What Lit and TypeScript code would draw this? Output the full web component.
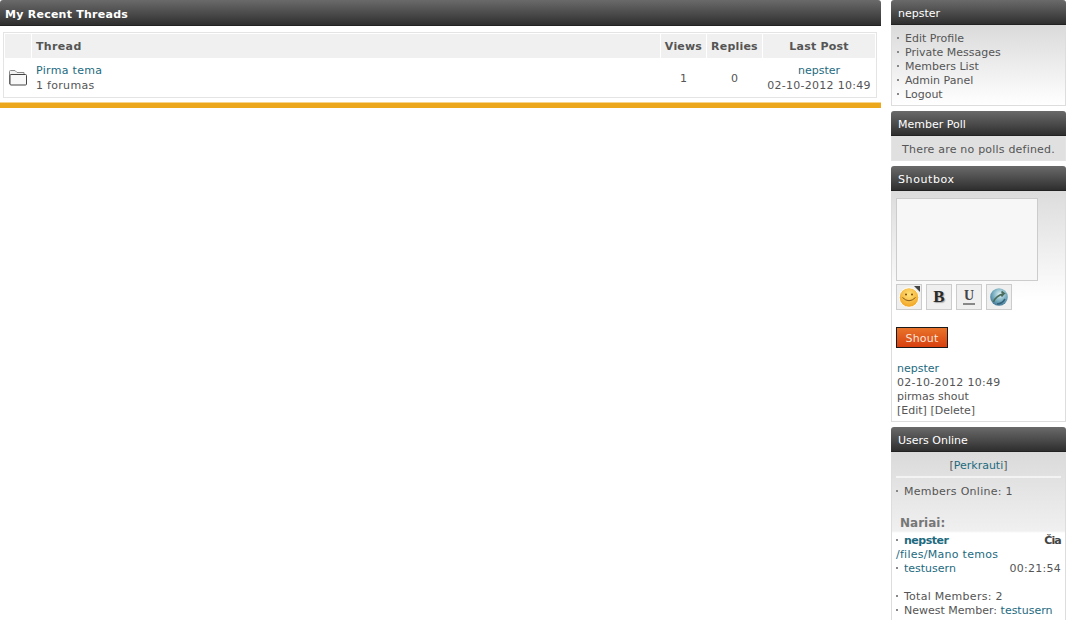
import { LitElement, html, css, svg } from "lit";
import { customElement } from "lit/decorators.js";

@customElement("app-root")
export class AppRoot extends LitElement {
  static styles = css`
    :host { display: block; width: 1066px; height: 620px; overflow: hidden; background: #fff;
      font-family: "DejaVu Sans", Verdana, sans-serif; font-size: 11px; line-height: 14px; color: #555; }
    a { color: #1d6a80; text-decoration: none; }
    .page { display: flex; gap: 10px; align-items: flex-start; }
    .main { width: 881px; flex: none; }
    .side { width: 175px; flex: none; display: flex; flex-direction: column; gap: 5px; }
    .cap { height: 25px; box-sizing: border-box; padding: 7px 7px 0; color: #fff; border-radius: 3px 3px 0 0;
      background: linear-gradient(#6a6a6a, #474747 60%, #2e2e2e); border-bottom: 1px solid #222; white-space: nowrap; }
    .main .cap { padding: 8px 5px 0; font-weight: bold; height: 26px; letter-spacing: .25px; }
    .wide { letter-spacing: .6px; }
    .tablewrap { margin: 6px 4px 0 3px; border: 1px solid #e4e4e4; padding: 1px 1px 0; height: 66px; box-sizing: border-box; }
    .grid { display: grid; grid-template-columns: 26px 628px 45px 55px 112px; column-gap: 1px; }
    .th { background: #f0f0f0; height: 24px; line-height: 25px; font-weight: bold; color: #555; text-align: center; letter-spacing: .2px; }
    .th.l { text-align: left; padding-left: 4px; letter-spacing: .35px; }
    .td { height: 40px; line-height: 15px; display: flex; flex-direction: column; justify-content: center; align-items: center; }
    .td.l { align-items: flex-start; padding-left: 4px; letter-spacing: .3px; }
    .td.i { align-items: flex-start; padding-left: 4px; }
    .num { letter-spacing: .27px; }
    .orange { height: 6px; margin-top: 4px; background: #eda71a; border-top: 1px solid #f6d48c; box-sizing: border-box; }
    .body { border: 1px solid #ddd; border-top: 0; box-sizing: border-box; background: linear-gradient(#dadada, #fff 100%); }
    .menu { padding: 7px 5px 0; height: 81px; }
    .row { white-space: nowrap; }
    .dot { display: inline-block; width: 8px; }
    .dot::before { content: ""; display: inline-block; width: 2px; height: 2px; background: #888; vertical-align: 3px; margin-right: 6px; }
    .poll { height: 25px; box-sizing: border-box; padding-top: 7px; text-align: center; background: #e0e0e0; border: 1px solid #e4e4e4; border-top: 0; letter-spacing: .2px; white-space: nowrap; }
    .shout { height: 231px; padding: 7px 4px 0; background: linear-gradient(#dcdcdc, #fff 110px, #fff); }
    .ta { width: 142px; height: 83px; box-sizing: border-box; background: #f7f7f7; border: 1px solid #ccc; }
    .tools { display: flex; gap: 4px; margin-top: 3px; }
    .tool { width: 26px; height: 26px; box-sizing: border-box; border: 1px solid #ccc; background: #efefef; display: flex; align-items: center; justify-content: center; position: relative; }
    .tool svg { display: block; }
    .corner { position: absolute; top: 1px; right: 1px; width: 0; height: 0; border-top: 6px solid #444; border-left: 6px solid transparent; }
    .gb { font-family: "Liberation Serif", serif; font-size: 17px; font-weight: bold; color: #2a2a2a; text-shadow: 1px 1px 1px #aaa; }
    .gu { font-family: "Liberation Serif", serif; font-size: 14px; font-weight: bold; color: #444; border-bottom: 2px solid #888; line-height: 14px; padding: 0 1px; }
    .btn { width: 52px; height: 21px; box-sizing: border-box; margin-top: 17px; border: 1px solid #1a1a1a; color: #f7e6da; text-align: center; line-height: 21px;
      background: linear-gradient(#e9742a, #d8400f); letter-spacing: .2px; }
    .msg { margin-top: 14px; padding-left: 1px; }
    .online { height: 175px; padding: 0 4px; background: linear-gradient(#dadada, #f0f0f0 79px, #fff 81px); }
    .reload { text-align: center; padding-top: 7px; }
    .sep { height: 2px; background: #f3f3f3; margin: 3px 0 7px; }
    .nar { margin: 16px 0 0 4px; font-weight: bold; font-size: 12px; color: #777; line-height: 17px; height: 19px; }
    .sp { display: flex; justify-content: space-between; }
    .tight { font-weight: bold; letter-spacing: -.5px; }
    b.dark { color: #444; letter-spacing: -.8px; }
    .gap { height: 14px; }
  `;

  private smile = svg`<svg width="22" height="22" viewBox="0 0 22 22">
    <defs><radialGradient id="s" cx="50%" cy="35%" r="65%"><stop offset="0" stop-color="#ffe27a"/><stop offset="1" stop-color="#f2a21f"/></radialGradient></defs>
    <circle cx="11" cy="11.5" r="9.8" fill="url(#s)" stroke="#fff" stroke-width="1"/>
    <circle cx="8" cy="8.5" r="1" fill="#7a4a10"/><circle cx="14" cy="8.5" r="1" fill="#7a4a10"/>
    <path d="M4.5 11.5 Q11 18 17.5 11.5" fill="none" stroke="#8a5a15" stroke-width="1"/></svg>`;

  private globe = svg`<svg width="20" height="20" viewBox="0 0 20 20">
    <defs><radialGradient id="g" cx="55%" cy="35%" r="70%"><stop offset="0" stop-color="#dff2f4"/><stop offset=".6" stop-color="#6fa8bc"/><stop offset="1" stop-color="#3d6f90"/></radialGradient></defs>
    <circle cx="10" cy="10" r="8.8" fill="url(#g)"/>
    <path d="M4.5 15 C6 10 10 8 15 6.5 L12.5 4.5 M15 6.5 L12.5 9.5" fill="none" stroke="#4a6a5a" stroke-width="1.7"/>
    <path d="M8 17 Q13 17 16 12" fill="none" stroke="#34607a" stroke-width="1.5"/></svg>`;

  private folder = svg`<svg width="18" height="16" viewBox="0 0 18 16">
    <path d="M.5 14 V1.5 Q.5 .5 1.5 .5 H6 L8 2.5 H15 V4.5" fill="#f1f1f1" stroke="#888"/>
    <path d="M2 4.5 H16.5 Q17.5 4.5 17.5 5.5 V14 Q17.5 15 16.5 15 H2 Q1 15 1 14 V5.5 Q1 4.5 2 4.5 Z" fill="#f8f8f8" stroke="#444"/></svg>`;

  private item(t: string, cls = "") {
    return html`<div class="row ${cls}"><span class="dot"></span>${t}</div>`;
  }

  render() {
    return html`<div class="page">
      <div class="main">
        <div class="cap">My Recent Threads</div>
        <div class="tablewrap">
          <div class="grid">
            <div class="th"></div>
            <div class="th l">Thread</div>
            <div class="th">Views</div>
            <div class="th">Replies</div>
            <div class="th">Last Post</div>
            <div class="td i">${this.folder}</div>
            <div class="td l"><a>Pirma tema</a><span>1 forumas</span></div>
            <div class="td">1</div>
            <div class="td">0</div>
            <div class="td"><a>nepster</a><span class="num">02-10-2012 10:49</span></div>
          </div>
        </div>
        <div class="orange"></div>
      </div>
      <div class="side">
        <div>
          <div class="cap">nepster</div>
          <div class="body menu">
            ${["Edit Profile", "Private Messages", "Members List", "Admin Panel", "Logout"].map((t) => this.item(t))}
          </div>
        </div>
        <div>
          <div class="cap">Member Poll</div>
          <div class="poll">There are no polls defined.</div>
        </div>
        <div>
          <div class="cap wide">Shoutbox</div>
          <div class="body shout">
            <div class="ta"></div>
            <div class="tools">
              <div class="tool">${this.smile}<span class="corner"></span></div>
              <div class="tool"><span class="gb">B</span></div>
              <div class="tool"><span class="gu">U</span></div>
              <div class="tool">${this.globe}</div>
            </div>
            <div class="btn">Shout</div>
            <div class="msg">
              <div><a>nepster</a></div>
              <div class="num">02-10-2012 10:49</div>
              <div>pirmas shout</div>
              <div>[Edit] [Delete]</div>
            </div>
          </div>
        </div>
        <div>
          <div class="cap">Users Online</div>
          <div class="body online">
            <div class="reload">[<a>Perkrauti</a>]</div>
            <div class="sep"></div>
            ${this.item("Members Online: 1", "num")}
            <div class="nar">Nariai:</div>
            <div class="sp"><span><span class="dot"></span><a class="tight">nepster</a></span><b class="dark">Čia</b></div>
            <div class="num"><a>/files/Mano temos</a></div>
            <div class="sp"><span><span class="dot"></span><a>testusern</a></span><span class="num">00:21:54</span></div>
            <div class="gap"></div>
            ${this.item("Total Members: 2", "num")}
            <div class="row"><span class="dot"></span>Newest Member: <a>testusern</a></div>
          </div>
        </div>
      </div>
    </div>`;
  }
}
